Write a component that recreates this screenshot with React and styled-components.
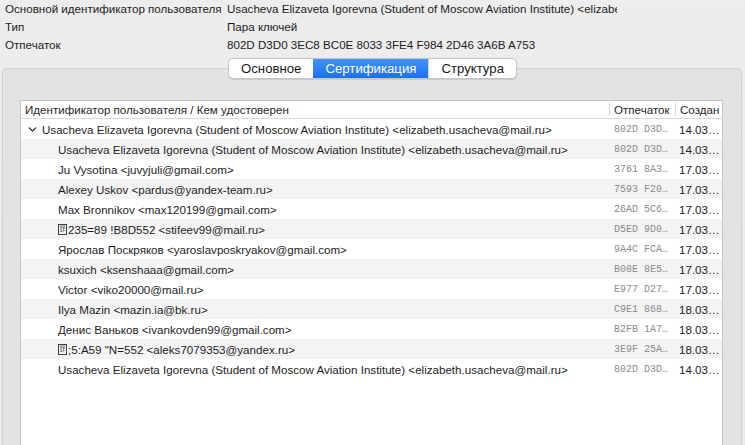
import React from "react";
import styled, { createGlobalStyle } from "styled-components";

const info = [
  ["Основной идентификатор пользователя", "Usacheva Elizaveta Igorevna (Student of Moscow Aviation Institute) <elizabeth.usacheva@mail.ru>"],
  ["Тип", "Пара ключей"],
  ["Отпечаток", "802D D3D0 3EC8 BC0E 8033 3FE4 F984 2D46 3A6B A753"],
];

const tabs = ["Основное", "Сертификация", "Структура"];

const owner = "Usacheva Elizaveta Igorevna (Student of Moscow Aviation Institute) <elizabeth.usacheva@mail.ru>";

const signers = [
  { name: owner, fp: "802D D3D0 3EC8 BC0E", date: "14.03.2020" },
  { name: "Ju Vysotina <juvyjuli@gmail.com>", fp: "3761 8A34 11C0 9E2B", date: "17.03.2020" },
  { name: "Alexey Uskov <pardus@yandex-team.ru>", fp: "7593 F206 AB71 0C4D", date: "17.03.2020" },
  { name: "Max Bronnikov <max120199@gmail.com>", fp: "26AD 5C61 E0F2 7731", date: "17.03.2020" },
  { name: "235=89 !B8D552 <stifeev99@mail.ru>", glyph: true, fp: "D5ED 9D03 44AA 81F0", date: "17.03.2020" },
  { name: "Ярослав Поскряков <yaroslavposkryakov@gmail.com>", fp: "9A4C FCA2 6D17 B905", date: "17.03.2020" },
  { name: "ksuxich <ksenshaaa@gmail.com>", fp: "B08E 8E57 03D9 C2A6", date: "17.03.2020" },
  { name: "Victor <viko20000@mail.ru>", fp: "E977 D27B 5A10 93EE", date: "17.03.2020" },
  { name: "Ilya Mazin <mazin.ia@bk.ru>", fp: "C9E1 8685 F3C2 0B4A", date: "18.03.2020" },
  { name: "Денис Ваньков <ivankovden99@gmail.com>", fp: "B2FB 1A72 9E04 6C3D", date: "18.03.2020" },
  { name: ";5:A59 \"N=552 <aleks7079353@yandex.ru>", glyph: true, fp: "3E9F 25A8 D116 70BC", date: "18.03.2020" },
  { name: owner, fp: "802D D3D0 3EC8 BC0E", date: "14.03.2020" },
];

const GlobalStyle = createGlobalStyle`
  html, body {
    margin: 0;
    padding: 0;
    background: #ececec;
    font-family: "Liberation Sans", Arial, sans-serif;
    color: #1c1c1c;
  }
`;

const Page = styled.div`
  width: 745px;
  height: 445px;
  overflow: hidden;
  display: flex;
  flex-direction: column;
  background: linear-gradient(#ededed, #e8e8e8);
`;

const InfoGrid = styled.div`
  display: grid;
  grid-template-columns: 222px 390px;
  grid-auto-rows: 18px;
  padding: 0 5px;
  font-size: 11.6px;
  line-height: 18px;
`;

const InfoValue = styled.div`
  white-space: nowrap;
  overflow: hidden;
`;

const TabBar = styled.div`
  align-self: flex-start;
  margin: 4px 0 -11px 228px;
  height: 21px;
  display: flex;
  position: relative;
  z-index: 1;
  background: #fff;
  border: 1px solid #c6c6c6;
  border-radius: 5px;
  overflow: hidden;
  box-sizing: border-box;
  box-shadow: 0 0.5px 1px rgba(0, 0, 0, 0.12);
`;

const Tab = styled.div`
  padding: 0 12px;
  font-size: 13.2px;
  line-height: 19px;
  color: ${(p) => (p.$active ? "#fff" : "#1a1a1a")};
  background: ${(p) => (p.$active ? "linear-gradient(#4193fb, #1c70f4)" : "transparent")};
  border-left: ${(p) => (p.$first || p.$active ? "none" : "1px solid #d4d4d4")};
`;

const Panel = styled.div`
  flex: 1;
  margin: 0 3px 0 2px;
  padding: 31px 18px 0 17px;
  background: #e3e3e3;
  border: 1px solid #d2d2d2;
  border-bottom: none;
  border-radius: 5px 5px 0 0;
  display: flex;
  flex-direction: column;
`;

const Table = styled.div`
  flex: 1;
  background: #fff;
  border: 1px solid #c5c5c5;
  border-bottom: none;
  font-size: 11.6px;
`;

const Row = styled.div`
  display: grid;
  grid-template-columns: 588px 66px 47px;
  height: ${(p) => (p.$head ? "17px" : "20px")};
  align-items: center;
  background: ${(p) => (p.$alt ? "#f4f4f5" : "#fff")};
  border-bottom: ${(p) => (p.$head ? "1px solid #dadada" : "none")};
`;

const HeadCell = styled.div`
  padding-left: 4px;
  height: 13px;
  line-height: 13px;
  color: #262626;
  white-space: nowrap;
  overflow: hidden;
  border-left: ${(p) => (p.$sep ? "1px solid #d8d8d8" : "none")};
`;

const NameCell = styled.div`
  display: flex;
  align-items: center;
  padding-left: ${(p) => (p.$child ? "37px" : "7px")};
  white-space: nowrap;
  overflow: hidden;
  color: #1d1d1d;
`;

const Chevron = styled.svg`
  width: 9px;
  height: 9px;
  margin-right: 5px;
  flex: none;
`;

const FpCell = styled.div`
  padding: 0 4px 0 5px;
  font-family: "Liberation Mono", "DejaVu Sans Mono", monospace;
  font-size: 10px;
  color: #8a8a8a;
  white-space: nowrap;
  overflow: hidden;
  text-overflow: ellipsis;
`;

const DateCell = styled.div`
  padding-left: 4px;
  white-space: nowrap;
  overflow: hidden;
  text-overflow: ellipsis;
  color: #222;
`;

const MissingGlyph = styled.span`
  display: inline-flex;
  flex-direction: column;
  justify-content: center;
  width: 9px;
  height: 11px;
  margin-right: 1px;
  border: 1px solid #444;
  box-sizing: border-box;
  font-family: "Liberation Mono", monospace;
  font-size: 4.5px;
  line-height: 4.5px;
  text-align: center;
  color: #333;
`;

const Signer = ({ item, alt }) => (
  <Row $alt={alt}>
    <NameCell $child>
      {item.glyph && (
        <MissingGlyph>
          <span>00</span>
          <span>1F</span>
        </MissingGlyph>
      )}
      {item.name}
    </NameCell>
    <FpCell>{item.fp}</FpCell>
    <DateCell>{item.date}</DateCell>
  </Row>
);

export default function App() {
  return (
    <Page>
      <GlobalStyle />
      <InfoGrid>
        {info.map(([label, value]) => (
          <React.Fragment key={label}>
            <div>{label}</div>
            <InfoValue>{value}</InfoValue>
          </React.Fragment>
        ))}
      </InfoGrid>

      <TabBar>
        {tabs.map((t, i) => (
          <Tab key={t} $active={i === 1} $first={i === 0}>
            {t}
          </Tab>
        ))}
      </TabBar>

      <Panel>
        <Table>
          <Row $head>
            <HeadCell>Идентификатор пользователя / Кем удостоверен</HeadCell>
            <HeadCell $sep>Отпечаток</HeadCell>
            <HeadCell $sep>Создан</HeadCell>
          </Row>
          <Row>
            <NameCell>
              <Chevron viewBox="0 0 10 10">
                <path d="M1.5 3.2 L5 6.8 L8.5 3.2" fill="none" stroke="#2a2a2a" strokeWidth="1.5" strokeLinecap="round" strokeLinejoin="round" />
              </Chevron>
              {owner}
            </NameCell>
            <FpCell>802D D3D0 3EC8 BC0E</FpCell>
            <DateCell>14.03.2020</DateCell>
          </Row>
          {signers.map((s, i) => (
            <Signer key={i} item={s} alt={i % 2 === 0} />
          ))}
        </Table>
      </Panel>
    </Page>
  );
}
